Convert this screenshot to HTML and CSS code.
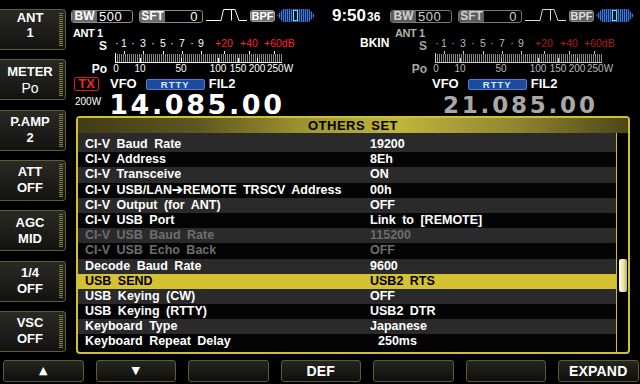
FILE: index.html
```html
<!DOCTYPE html>
<html>
<head>
<meta charset="utf-8">
<link rel="stylesheet" href="styles.css">
</head>
<body>
<div class="screen">
  <div class="upper">
    <nav class="side">
      <div class="sbtn first"><div class="t"><span>ANT</span><span>1</span></div><div class="g"></div></div>
      <div class="sbtn"><div class="t"><span>METER</span><span class="lo">Po</span></div><div class="g"></div></div>
      <div class="sbtn"><div class="t"><span>P.AMP</span><span>2</span></div><div class="g"></div></div>
      <div class="sbtn"><div class="t"><span>ATT</span><span>OFF</span></div><div class="g"></div></div>
      <div class="sbtn"><div class="t"><span>AGC</span><span>MID</span></div><div class="g"></div></div>
      <div class="sbtn"><div class="t"><span>1/4</span><span>OFF</span></div><div class="g"></div></div>
      <div class="sbtn"><div class="t"><span>VSC</span><span>OFF</span></div><div class="g"></div></div>
    </nav>
    <main class="main">
      <header class="topbar">
        <div class="grp">
          <div class="box bw"><span class="lbl">BW</span><span class="val">500</span></div>
          <div class="box sft"><span class="lbl">SFT</span><span class="val r">0</span></div>
          <svg class="filt" width="41" height="13" viewBox="0 0 41 13"><polyline points="0,11.5 15,11.5 17.5,0.5 29,0.5 33,11.5 41,11.5" fill="none" stroke="#fff" stroke-width="1"/><line x1="25.5" y1="1" x2="25.5" y2="11.5" stroke="#fff"/></svg>
          <span class="bpf">BPF</span>
          <svg class="arr" width="38" height="13" viewBox="0 0 38 13"><defs><pattern id="st" x="0" y="0" width="2" height="13" patternUnits="userSpaceOnUse"><rect width="1" height="13" fill="#3f78d8"/></pattern></defs><polygon points="0,6.5 6,0 32,0 38,6.5 32,13 6,13" fill="#0d2350"/><polygon points="0,6.5 6,0 32,0 38,6.5 32,13 6,13" fill="url(#st)"/><rect x="16.5" y="1.5" width="4" height="10" fill="#041018" stroke="#5fe4f4"/></svg>
        </div>
        <div class="clock">9:50<small>36</small></div>
        <div class="grp sub">
          <div class="box bw"><span class="lbl">BW</span><span class="val">500</span></div>
          <div class="box sft"><span class="lbl">SFT</span><span class="val r">0</span></div>
          <svg class="filt" width="41" height="13" viewBox="0 0 41 13"><polyline points="0,11.5 15,11.5 17.5,0.5 29,0.5 33,11.5 41,11.5" fill="none" stroke="#ddd" stroke-width="1"/><line x1="25.5" y1="1" x2="25.5" y2="11.5" stroke="#ddd"/></svg>
          <span class="bpf">BPF</span>
          <svg class="arr" width="38" height="13" viewBox="0 0 38 13"><polygon points="0,6.5 6,0 32,0 38,6.5 32,13 6,13" fill="#0d2350"/><polygon points="0,6.5 6,0 32,0 38,6.5 32,13 6,13" fill="url(#st)"/><rect x="16.5" y="1.5" width="4" height="10" fill="#041018" stroke="#5fe4f4"/></svg>
        </div>
      </header>

      <section class="rx">
        <div class="rxblk left">
          <div class="ant">ANT 1</div>
          <svg class="meter" width="230" height="38" viewBox="0 0 230 38">
            <defs><pattern id="tk" x="45" y="0" width="2" height="38" patternUnits="userSpaceOnUse"><rect width="1" height="38" fill="#8a8a8a"/></pattern></defs>
            <text class="ml" x="37" y="12" text-anchor="end">S</text>
            <g class="sl" text-anchor="middle">
              <text x="47" y="9">·</text><text x="54" y="9">1</text>
              <text x="63" y="9">·</text><text x="73" y="9">3</text>
              <text x="83" y="9">·</text><text x="93" y="9">5</text>
              <text x="102" y="9">·</text><text x="112" y="9">7</text>
              <text x="122" y="9">·</text><text x="131" y="9">9</text>
            </g>
            <g class="sr"><text x="154" y="9" text-anchor="middle">+20</text><text x="179" y="9" text-anchor="middle">+40</text><text x="194" y="9">+60dB</text></g>
            <rect x="45" y="16" width="167" height="8" fill="url(#tk)"/>
            <g class="mj" stroke="#fff">
              <path d="M54.5 13v3M73.5 13v3M93.5 13v3M112.5 13v3M131.5 13v3M154.5 13v3M179.5 13v3M204.5 13v3"/>
              <path d="M70.5 20v4M111.5 20v4M148.5 20v4M168.5 20v4M187.5 20v4"/>
              <path d="M45 24.5H212M45.5 15v10"/>
            </g>
            <text class="ml" x="37" y="34.5" text-anchor="end">Po</text>
            <g class="pl" text-anchor="middle">
              <text x="46" y="34">0</text><text x="70" y="34">10</text><text x="111" y="34">50</text>
              <text x="148" y="34">100</text><text x="168" y="34">150</text><text x="187" y="34">200</text>
            </g>
            <text class="pl" x="197" y="34">250W</text>
          </svg>
          <div class="mode">
            <span class="tx">TX</span>
            <span class="vfo">VFO</span>
            <span class="pill">RTTY</span>
            <span class="fil">FIL2</span>
          </div>
          <div class="frow">
            <span class="pwr">200W</span>
            <span class="freq">14.085.00</span>
          </div>
        </div>
        <div class="bkin">BKIN</div>
        <div class="rxblk right dim">
          <div class="ant">ANT 1</div>
          <svg class="meter" width="230" height="38" viewBox="0 0 230 38">
            <text class="ml" x="37" y="12" text-anchor="end">S</text>
            <g class="sl" text-anchor="middle">
              <text x="47" y="9">·</text><text x="54" y="9">1</text>
              <text x="63" y="9">·</text><text x="73" y="9">3</text>
              <text x="83" y="9">·</text><text x="93" y="9">5</text>
              <text x="102" y="9">·</text><text x="112" y="9">7</text>
              <text x="122" y="9">·</text><text x="131" y="9">9</text>
            </g>
            <g class="sr"><text x="154" y="9" text-anchor="middle">+20</text><text x="179" y="9" text-anchor="middle">+40</text><text x="194" y="9">+60dB</text></g>
            <rect x="45" y="16" width="167" height="8" fill="url(#tk)"/>
            <g class="mj" stroke="#ccc">
              <path d="M54.5 13v3M73.5 13v3M93.5 13v3M112.5 13v3M131.5 13v3M154.5 13v3M179.5 13v3M204.5 13v3"/>
              <path d="M70.5 20v4M111.5 20v4M148.5 20v4M168.5 20v4M187.5 20v4"/>
              <path d="M45 24.5H212M45.5 15v10"/>
            </g>
            <text class="ml" x="37" y="34.5" text-anchor="end">Po</text>
            <g class="pl" text-anchor="middle">
              <text x="46" y="34">0</text><text x="70" y="34">10</text><text x="111" y="34">50</text>
              <text x="148" y="34">100</text><text x="168" y="34">150</text><text x="187" y="34">200</text>
            </g>
            <text class="pl" x="197" y="34">250W</text>
          </svg>
          <div class="mode">
            <span class="vfo">VFO</span>
            <span class="pill">RTTY</span>
            <span class="fil">FIL2</span>
          </div>
          <div class="frow">
            <span class="freq">21.085.00</span>
          </div>
        </div>
      </section>

      <div class="panel">
        <div class="phead">OTHERS SET</div>
        <div class="pbody">
          <div class="list">
            <div class="row g first"><span class="n">CI-V Baud Rate</span><span class="v">19200</span></div>
            <div class="row"><span class="n">CI-V Address</span><span class="v">8Eh</span></div>
            <div class="row g"><span class="n">CI-V Transceive</span><span class="v">ON</span></div>
            <div class="row"><span class="n">CI-V USB/LAN➔REMOTE TRSCV Address</span><span class="v">00h</span></div>
            <div class="row g"><span class="n">CI-V Output (for ANT)</span><span class="v">OFF</span></div>
            <div class="row"><span class="n">CI-V USB Port</span><span class="v">Link to [REMOTE]</span></div>
            <div class="row g dis"><span class="n">CI-V USB Baud Rate</span><span class="v">115200</span></div>
            <div class="row dis"><span class="n">CI-V USB Echo Back</span><span class="v">OFF</span></div>
            <div class="row g"><span class="n">Decode Baud Rate</span><span class="v">9600</span></div>
            <div class="row sel"><span class="n">USB SEND</span><span class="v">USB2 RTS</span></div>
            <div class="row g"><span class="n">USB Keying (CW)</span><span class="v">OFF</span></div>
            <div class="row"><span class="n">USB Keying (RTTY)</span><span class="v">USB2 DTR</span></div>
            <div class="row g"><span class="n">Keyboard Type</span><span class="v">Japanese</span></div>
            <div class="row"><span class="n">Keyboard Repeat Delay</span><span class="v ind">250ms</span></div>
          </div>
          <div class="scroll"><div class="thumb"></div></div>
        </div>
      </div>
    </main>
  </div>
  <footer class="bottom">
    <div class="fbtn"><span class="tri">▲</span></div>
    <div class="fbtn"><span class="tri">▼</span></div>
    <div class="fbtn"></div>
    <div class="fbtn">DEF</div>
    <div class="fbtn"></div>
    <div class="fbtn"></div>
    <div class="fbtn">EXPAND</div>
  </footer>
</div>
</body>
</html>
```

FILE: styles.css
```css
* { box-sizing: border-box; margin: 0; padding: 0; }
html, body { width: 640px; height: 384px; overflow: hidden; background: #000; }
body { font-family: "Liberation Sans", Arial, sans-serif; color: #fff; }

.screen { width: 640px; height: 384px; display: flex; flex-direction: column; }
.upper { height: 360px; display: flex; }

/* left soft keys */
.side { width: 66px; display: flex; flex-direction: column; gap: 9.33px; padding-top: 9px; }
.sbtn {
  width: 69px; height: 41px; margin-left: -3px; display: flex;
  border: 1px solid #5e5c30; border-radius: 3px;
  background: linear-gradient(#2a2a25, #121210);
}
.sbtn .t {
  flex: 1; display: flex; flex-direction: column; align-items: center; justify-content: center;
  font-weight: bold; font-size: 13px; line-height: 16px; padding-left: 3px;
}
.sbtn.first .t { line-height: 15px; padding-bottom: 10px; }
.sbtn .lo { font-weight: normal; font-size: 14px; }
.sbtn .g {
  width: 4px; margin: 3px 2px 3px 0;
  background: repeating-linear-gradient(#7d7a42 0 1px, #24241a 1px 2px);
}

.main { flex: 1; display: flex; flex-direction: column; }

/* top status bar */
.topbar { height: 26px; padding: 10px 0 0 5px; display: flex; align-items: flex-start; }
.grp { width: 244px; display: flex; align-items: flex-start; }
.box {
  height: 13px; display: flex; border: 1px solid #8c8c8c; border-radius: 3px; overflow: hidden;
  font-size: 13px; line-height: 11px;
}
.box .lbl { background: #6c6c6c; font-weight: bold; font-size: 12px; width: 25px; text-align: center; }
.box .val { flex: 1; padding-left: 2px; letter-spacing: 0.5px; }
.box .val.r { text-align: right; padding-right: 4px; }
.bw { width: 62px; }
.sft { width: 64px; margin-left: 6px; }
.filt { margin: -1px 0 0 3px; display: block; }
.bpf {
  margin-left: 3px; width: 25px; height: 12px; background: #6e6e6e; border: 1px solid #9c9c9c;
  border-radius: 3px; font-size: 11px; font-weight: bold; line-height: 10px; text-align: center;
}
.arr { margin: -1px 0 0 2px; display: block; }
.clock { width: 75px; padding-left: 17px; margin-top: -3px; font-size: 17px; font-weight: bold; line-height: 17px; }
.clock small { font-size: 12px; margin-left: 1px; }
.sub .box { color: #d0d0d0; border-color: #7a7a7a; }
.sub .box .lbl { background: #5c5c5c; }
.sub .bpf { color: #ddd; background: #5e5e5e; border-color: #8a8a8a; }

/* receiver blocks */
.rx { height: 90px; display: flex; }
.rxblk { display: flex; flex-direction: column; }
.rxblk.left { width: 294px; padding-left: 4px; }
.rxblk.right { flex: 1; }
.bkin { width: 30px; padding-top: 10px; font-size: 12px; font-weight: bold; line-height: 14px; }
.ant { height: 12px; font-size: 11px; font-weight: bold; line-height: 12px; letter-spacing: -0.4px; padding: 1px 0 0 3px; }
.right .ant { padding-left: 5px; color: #b0b0b0; }
.meter { display: block; }
.meter text { font-family: "Liberation Sans", Arial, sans-serif; }
.meter .ml { font-size: 12px; font-weight: bold; fill: #fff; }
.meter .sl, .meter .sr { font-size: 10.5px; }
.meter .sl { fill: #fff; }
.meter .sr { fill: #ff2424; }
.meter .pl { font-size: 10px; fill: #fff; }
.dim .meter .ml { fill: #a8a8a8; }
.dim .meter .sl, .dim .meter .pl { fill: #b8b8b8; }
.dim .meter .sr { fill: #b01c1c; }

.mode { height: 16px; display: flex; align-items: center; }
.tx {
  margin-left: 4px; width: 25px; height: 14px; border: 1.5px solid #d42020; border-radius: 2px;
  color: #f02828; font-weight: bold; font-size: 13px; line-height: 11px; text-align: center;
}
.vfo { margin-left: 11px; font-size: 13px; font-weight: bold; line-height: 14px; }
.right .vfo { margin-left: 42px; }
.pill {
  margin-left: 9px; width: 59px; height: 11px; background: #1d4c9e; border: 1px solid #4c80d8;
  border-radius: 2px; font-size: 9.5px; font-weight: bold; line-height: 9px; text-align: center;
  letter-spacing: 1px; color: #dce8ff;
}
.fil { margin-left: 4px; font-size: 13px; font-weight: bold; line-height: 14px; }

.frow { height: 24px; display: flex; align-items: flex-start; }
.pwr { margin: 4px 0 0 5px; font-size: 10px; line-height: 12px; }
.freq {
  display: block; height: 24px; overflow: visible; margin-left: 8px;
  font-family: "DejaVu Sans", sans-serif; font-weight: bold;
  font-size: 27px; line-height: 25px; letter-spacing: 2.6px;
}
.right .freq { margin-left: 53px; font-size: 23px; line-height: 26px; letter-spacing: 2.8px; color: #a8a8a8; }

/* settings panel */
.panel {
  margin-left: 10px; width: 554px; height: 238px; border: 2px solid #cfbf3a; border-radius: 4px;
  display: flex; flex-direction: column; overflow: hidden;
}
.phead {
  height: 15px; text-align: center; color: #000; font-weight: bold; font-size: 13px; line-height: 15px;
  letter-spacing: 0.5px; word-spacing: 2px;
  background: linear-gradient(to right, #403c14 0%, #5e5820 22%, #a09630 42%, #c2b53c 58%, #8e8530 80%, #4c4618 100%);
}
.pbody { flex: 1; display: flex; }
.list { width: 538px; display: flex; flex-direction: column; }
.row {
  height: 15.2px; display: flex; padding-left: 7px; background: #040404;
  font-size: 12.5px; font-weight: bold; line-height: 15.2px; word-spacing: 3px; white-space: nowrap;
}
.row.g { background: #2a2a2a; }
.row.first { height: 19.2px; padding-top: 4px; }
.row.dis { color: #6e6e6e; }
.row.sel { background: #d5c233; color: #000; }
.row .n { width: 285px; }
.row .v.ind { padding-left: 8px; }
.scroll { flex: 1; border-left: 1px solid #cfbf3a; }
.thumb {
  width: 8px; height: 33px; margin: 126px 0 0 2px; border-radius: 2px;
  background: linear-gradient(to right, #fffbe6, #ece4a8 55%, #b9b162);
}

/* bottom soft keys */
.bottom { height: 24px; display: flex; gap: 12px; padding-left: 3px; }
.fbtn {
  width: 80.5px; height: 22px; border: 1px solid #5e5c30; border-radius: 3px;
  background: linear-gradient(#262620, #0e0e0c);
  display: flex; align-items: center; justify-content: center;
  font-size: 14px; font-weight: bold; letter-spacing: 0.2px;
}
.tri { font-family: "DejaVu Sans", sans-serif; font-size: 11px; line-height: 12px; }
```
